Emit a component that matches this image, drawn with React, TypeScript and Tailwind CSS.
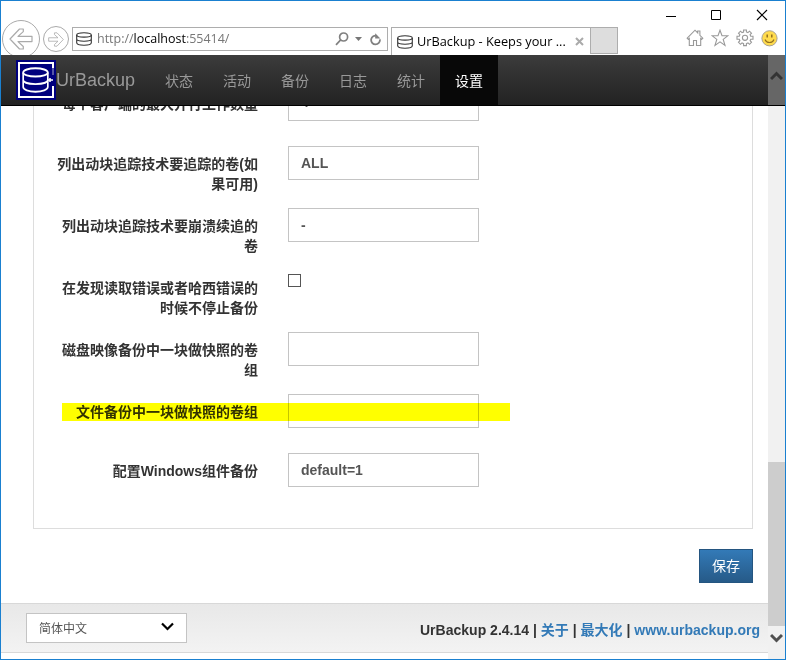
import type { ReactNode } from "react";

const uiFont = "font-['Open_Sans','Noto_Sans_CJK_SC',sans-serif]";
const pageFont = "font-['Liberation_Sans','Noto_Sans_CJK_SC',sans-serif]";

function Database({ className, stroke = 1.1 }: { className: string; stroke?: number }) {
  return (
    <svg viewBox="0 0 16 14" className={className} fill="none" stroke="currentColor" strokeWidth={stroke} preserveAspectRatio="none">
      <ellipse cx="8" cy="2.9" rx="7.3" ry="2.2" />
      <path d="M.7 3v7.8c0 1.4 3.2 2.5 7.3 2.5s7.3-1.1 7.3-2.5V3M.7 7c0 1.3 3.2 2.2 7.3 2.2s7.3-.9 7.3-2.2" />
    </svg>
  );
}

function Arrow({ className, flip = false }: { className: string; flip?: boolean }) {
  return (
    <svg viewBox="0 0 24 22" className={className} fill="none" stroke="currentColor" strokeWidth="1.2" strokeLinejoin="round">
      <path
        transform={flip ? "matrix(-1 0 0 1 24 0)" : undefined}
        d="M1 11 10.5 1h3.8v2.6L9 8.4h14v5.2H9l5.3 4.9V21h-3.8z"
      />
    </svg>
  );
}

function WindowButtons() {
  return (
    <div className="flex h-[26px] items-center justify-end gap-[34px] pr-[17px] pt-[2px] text-black">
      <svg width="11" height="11" viewBox="0 0 11 11" stroke="currentColor"><path d="M0 6.5h10" /></svg>
      <svg width="11" height="11" viewBox="0 0 11 11" stroke="currentColor" fill="none"><path d="M.5.5h9v9h-9z" /></svg>
      <svg width="12" height="12" viewBox="0 0 12 12" stroke="currentColor" strokeWidth="1.15"><path d="m1 1 10 10M11 1 1 11" /></svg>
    </div>
  );
}

function BrowserTools() {
  return (
    <div className="ml-auto mr-[7px] mt-[2px] flex gap-[7px] text-[#999]">
      <svg width="18" height="18" viewBox="0 0 18 18" fill="none" stroke="currentColor" strokeWidth="1.1">
        <path d="m1.2 9.2 7.8-8 2.7 2.8V2h2.2v4.3l2.9 2.9-1 1-1.1-.9v7.2h-4.2v-5h-3v5H3.3V9.3l-1.1.9z" />
      </svg>
      <svg width="18" height="18" viewBox="0 0 18 18" fill="none" stroke="currentColor" strokeWidth="1.1">
        <path d="m9 1.2 2 5.5h6l-4.8 3.7 1.8 6-5-3.5-5 3.5 1.8-6L1 6.7h6z" />
      </svg>
      <svg width="18" height="18" viewBox="0 0 18 18" fill="none" stroke="currentColor" strokeWidth="1.1">
        <path d="M7.6 1h2.8v2l1.5.6 1.6-1.4 2 2-1.4 1.5.6 1.6H17v2.9h-2.2l-.7 1.5 1.4 1.6-2 2-1.5-1.4-1.6.7v2H7.6v-2L6 13.9l-1.5 1.4-2-2 1.4-1.6-.6-1.5H1V7.3h2.3l.6-1.6-1.4-1.5 2-2L6 3.6 7.6 3z" />
        <circle cx="9" cy="8.8" r="2.6" />
      </svg>
      <svg className="mt-px" width="17" height="17" viewBox="0 0 17 17">
        <circle cx="8.5" cy="8.3" r="7.6" fill="#ffdb4d" stroke="#a9a294" />
        <path d="M6.2 4.5v3M10.8 4.5v3" stroke="#8a681d" strokeWidth="1.4" />
        <path d="M4 9.5c1.5 4 7.5 4 9 0" fill="none" stroke="#92701e" strokeWidth="1.1" />
      </svg>
    </div>
  );
}

function BrowserChrome() {
  return (
    <header className={`h-[54px] shrink-0 overflow-hidden bg-white ${uiFont}`}>
      <WindowButtons />
      <div className="flex h-7 items-start">
        <div className="-mt-[7px] ml-[1px] flex size-[38px] shrink-0 items-center justify-center rounded-full border border-[#aaa] text-[#aaa]">
          <Arrow className="h-[22px] w-6" />
        </div>
        <div className="-mt-[1px] ml-[3px] flex size-[26px] shrink-0 items-center justify-center rounded-full border border-[#aaa] text-[#aaa]">
          <Arrow className="h-[15px] w-4" flip />
        </div>
        <div className="ml-[3px] flex h-6 w-[316px] shrink-0 items-center border border-[#adadad] pl-[3px] text-[#777]">
          <Database className="h-[14px] w-4 text-[#333]" />
          <span className="ml-[5px] whitespace-nowrap pt-px text-[12.5px] tracking-[-0.01px]">http://<span className="text-black">localhost</span>:55414/</span>
          <svg className="ml-auto mr-[6px]" width="14" height="14" viewBox="0 0 14 14" fill="none" stroke="#808080" strokeWidth="1.7">
            <circle cx="8.6" cy="5" r="4" /><path d="M5.7 7.9 1 12.8" />
          </svg>
          <svg className="mr-2" width="7" height="4" viewBox="0 0 7 4" fill="#777"><path d="M0 0h7L3.5 4z" /></svg>
          <svg className="mr-[5px]" width="12" height="13" viewBox="0 0 12 13" fill="none" stroke="#808080" strokeWidth="1.8">
            <path d="M9.9 6.4a4.4 4.4 0 1 1-3-3.6" /><path d="M5.2.2v5.2h5.2z" fill="#808080" stroke="none" />
          </svg>
        </div>
        <div className="ml-[3px] flex h-7 w-[199px] shrink-0 items-center border-l border-t border-[#adadad] pl-[5px]">
          <Database className="h-[14px] w-4 text-[#333]" />
          <span className="ml-1 whitespace-nowrap text-[12.75px] text-black">UrBackup - Keeps your ...</span>
          <svg className="ml-auto mr-[6px]" width="9" height="9" viewBox="0 0 9 9" stroke="#aaa" strokeWidth="2"><path d="m1 1 7 7M8 1 1 8" /></svg>
        </div>
        <div className="h-[27px] w-7 shrink-0 border border-[#adadad] bg-[#ddd]" />
        <BrowserTools />
      </div>
    </header>
  );
}

const menu = ["状态", "活动", "备份", "日志", "统计", "设置"];

function Navbar() {
  return (
    <nav className="flex h-[51px] shrink-0 border-b border-black bg-linear-to-b from-[#3c3c3c] to-[#222]">
      <div className="ml-[15px] mt-[5px] size-10 shrink-0 bg-[#00007e] p-[2px]">
        <div className="relative flex size-full items-center justify-center border-2 border-white">
          <Database className="mr-px h-[26px] w-[27px] text-white" stroke={1} />
          <svg className="absolute -right-[2px] top-[4px]" width="7" height="18" viewBox="0 0 7 18">
            <path d="M5 0h2v18H5z" fill="#00007e" /><path d="M5 0h2v7H5z" fill="#5555a8" /><path d="M0 12h6M3 10v4" stroke="#fff" strokeWidth="1.5" />
          </svg>
        </div>
      </div>
      <span className="mt-[15px] w-[94px] text-[18px] leading-5 text-[#999]">UrBackup</span>
      <div className="flex text-[14px] text-[#999]">
        {menu.map((name) => (
          <a key={name} className={`flex w-[58px] items-center justify-center pt-[2px] ${name === "设置" ? "bg-[#080808] text-white" : ""}`}>{name}</a>
        ))}
      </div>
      <div className="ml-auto flex w-[17px] justify-center bg-[#666] pt-[16px]">
        <svg width="13" height="10" viewBox="0 0 13 10" fill="none" stroke="#333" strokeWidth="3"><path d="m1 8 5.5-5.5L12 8" /></svg>
      </div>
    </nav>
  );
}

function Row({ label, children, height }: { label: ReactNode; children: ReactNode; height: string }) {
  return (
    <div className={`mb-[25px] flex shrink-0 ${height}`}>
      <div className="mr-[30px] w-[224px] shrink-0 whitespace-nowrap pt-2 text-right leading-5 text-[#333]">{label}</div>
      {children}
    </div>
  );
}

function Field({ value = "" }: { value?: string }) {
  return <div className="flex h-[34px] w-[191px] items-center border border-[#c4c4c4] px-3 text-[#555]">{value}</div>;
}

function SettingsPanel() {
  return (
    <section className="relative ml-8 flex h-[423px] w-[720px] shrink-0 flex-col overflow-hidden border-x border-b border-[#ddd] text-[14px] font-bold">
      <div className="-mt-[19px]" />
      <Row height="h-[34px]" label={<div className="-mt-px">每个客户端的最大并行工作数量</div>}>
        <div className="flex h-[34px] w-[191px] items-center border border-[#c4c4c4] px-3 pb-[3px] text-[#555]">4</div>
      </Row>
      <Row height="h-[37px]" label={<>列出动块追踪技术要追踪的卷(如<br />果可用)</>}><Field value="ALL" /></Row>
      <Row height="h-[37px]" label={<>列出动块追踪技术要崩溃续追的<br />卷</>}><Field value="-" /></Row>
      <Row height="h-[37px]" label={<>在发现读取错误或者哈西错误的<br />时候不停止备份</>}>
        <div className="mt-1 size-[13px] border border-[#555]" />
      </Row>
      <Row height="h-[37px]" label={<>磁盘映像备份中一块做快照的卷<br />组</>}><Field /></Row>
      <Row height="h-[34px]" label="文件备份中一块做快照的卷组"><Field /></Row>
      <Row height="h-[34px]" label="配置Windows组件备份"><Field value="default=1" /></Row>
      <div className="absolute left-[27.5px] top-[297px] h-[18px] w-[448px] bg-[#ff0] mix-blend-multiply" />
    </section>
  );
}

function Footer() {
  return (
    <footer className="flex h-[50px] items-center justify-between border-y border-[#d8d8d8] bg-linear-to-b from-[#e8e8e8] to-[#f3f3f3] pl-[25px] pr-2">
      <div className="flex h-[30px] w-[161px] items-center justify-between border border-[#c4c4c4] bg-white pl-3 pr-3 text-[12px] text-[#555]">
        <span className="pt-px">简体中文</span>
        <svg className="-mt-[3px]" width="13" height="9" viewBox="0 0 13 9" fill="none" stroke="#000" strokeWidth="2.2"><path d="m1 1.5 5.5 5.5L12 1.5" /></svg>
      </div>
      <div className="mt-1 whitespace-nowrap text-[14px] font-bold leading-5 tracking-[0.01px] text-[#333]">
        UrBackup 2.4.14 | <a className="text-[#337ab7]">关于</a> | <a className="text-[#337ab7]">最大化</a> | <a className="text-[#337ab7]">www.urbackup.org</a>
      </div>
    </footer>
  );
}

function Scrollbar() {
  return (
    <aside className="flex w-[17px] shrink-0 flex-col bg-[#f1f1f1]">
      <div className="h-[356px]" />
      <div className="h-[164px] bg-[#cdcdcd]" />
      <svg className="ml-[2px] mt-[7px]" width="13" height="10" viewBox="0 0 13 10" fill="none" stroke="#505050" strokeWidth="3"><path d="M1 2l5.5 5.5L12 2" /></svg>
    </aside>
  );
}

export default function App() {
  return (
    <div className={`flex h-[660px] w-[786px] flex-col overflow-hidden border border-[#1a80d0] bg-white ${pageFont}`}>
      <BrowserChrome />
      <Navbar />
      <div className="flex min-h-0 flex-1">
        <main className="flex w-[767px] shrink-0 flex-col">
          <SettingsPanel />
          <div className="flex h-[74px] shrink-0 justify-end pr-[15px] pt-5">
            <button className="h-[34px] w-[54px] border border-[#245580] bg-linear-to-b from-[#337ab7] to-[#265a88] text-[14px] text-white">保存</button>
          </div>
          <Footer />
        </main>
        <Scrollbar />
      </div>
    </div>
  );
}
